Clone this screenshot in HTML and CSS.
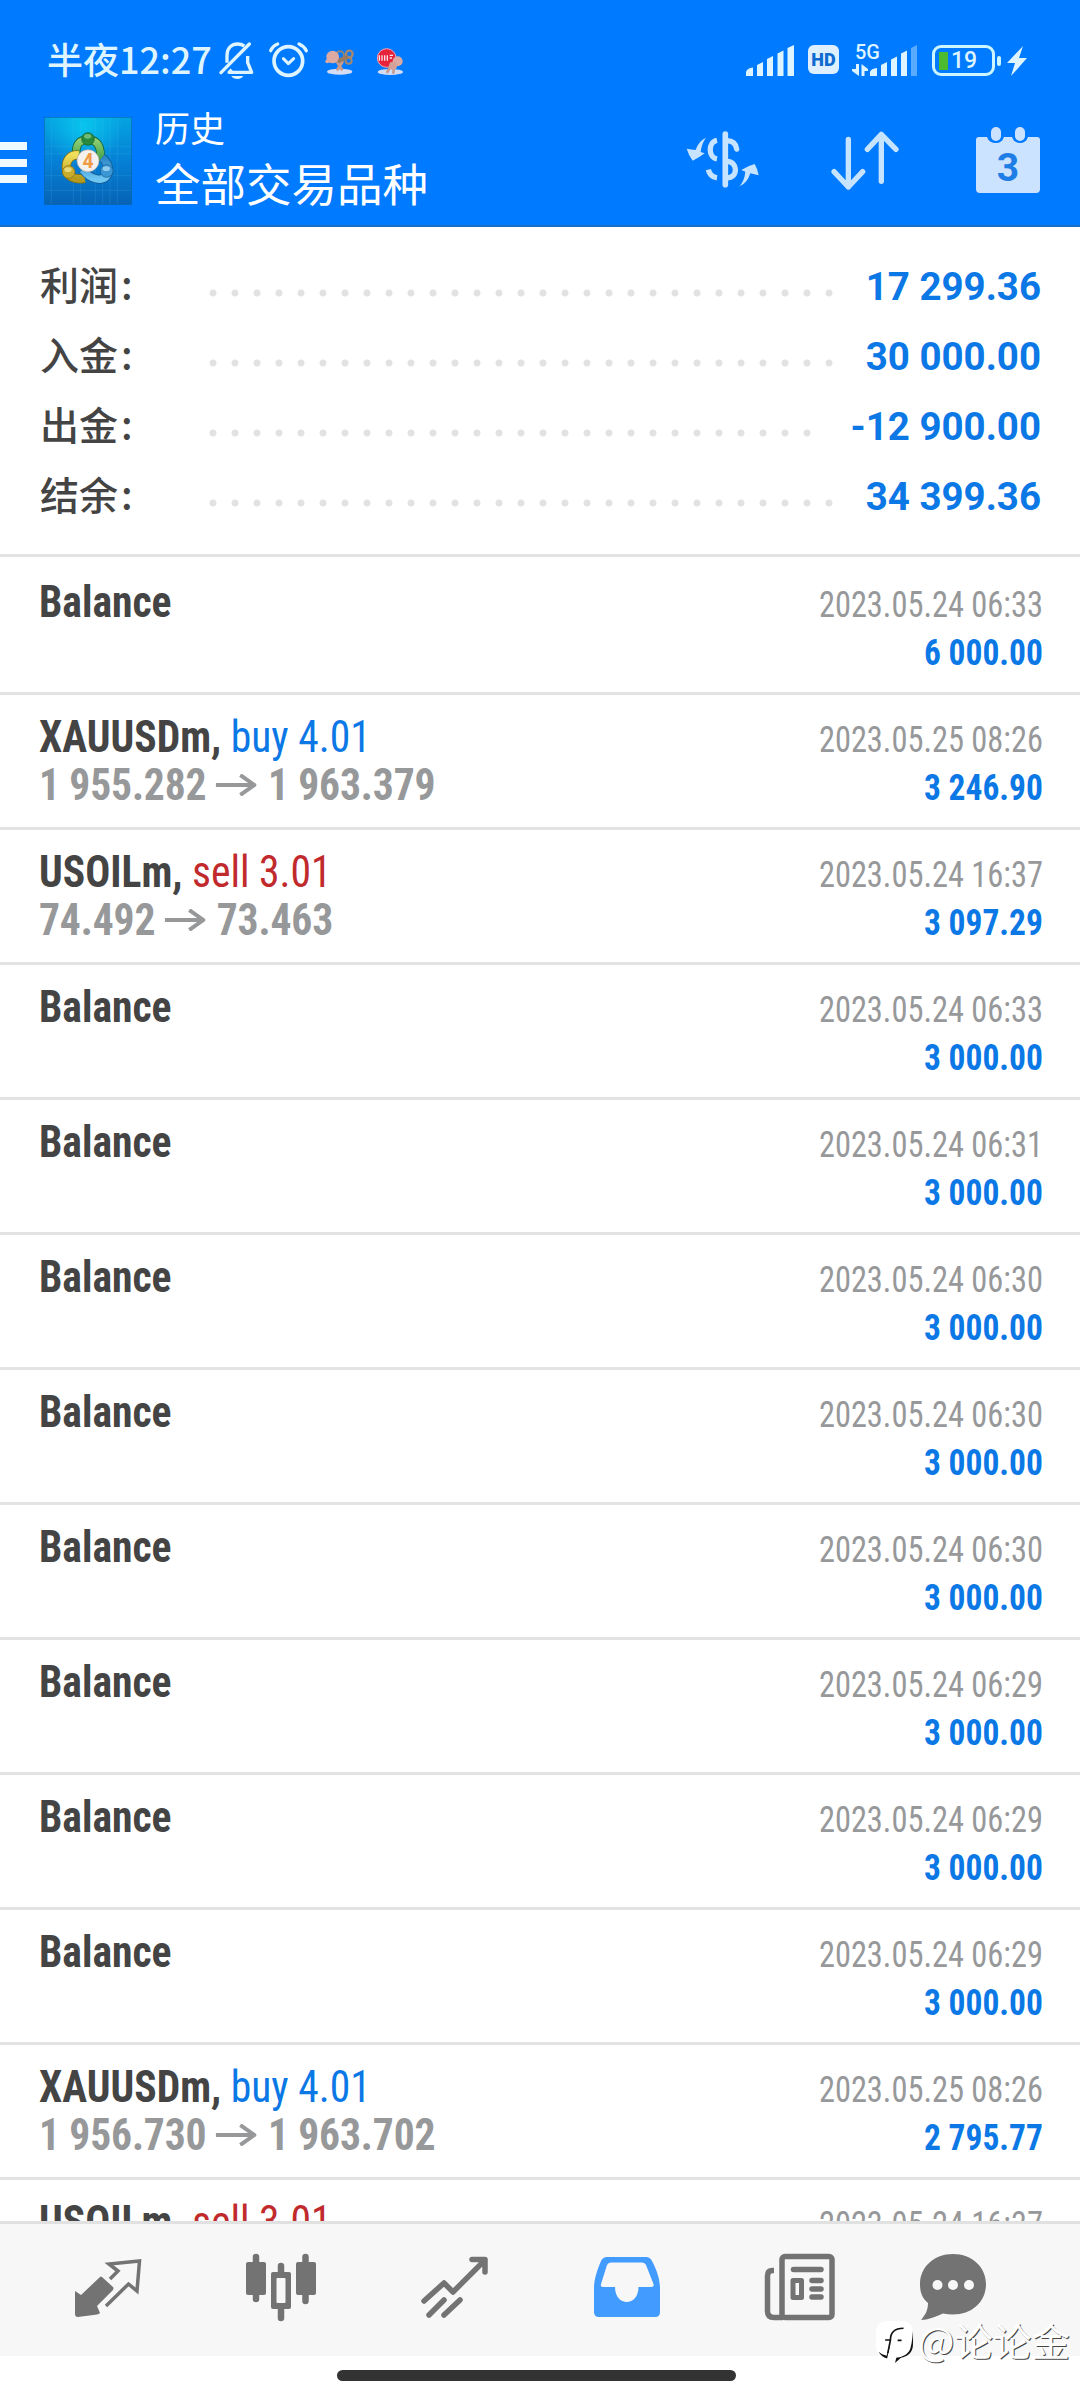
FILE: index.html
```html
<!DOCTYPE html>
<html lang="zh-CN">
<head>
    <meta charset="UTF-8">
    <meta name="viewport" content="width=device-width, initial-scale=1.0">
    <title>历史</title>
    <link rel="stylesheet" href="styles.css">
</head>
<body>

<div class="screen">

    <header class="header">
        <!-- Phone status bar -->
        <div class="status-bar">
            <div class="status-left">
                <span class="clock">半夜12:27</span>
                <svg class="bell" viewBox="28 33 108 116" width="36" height="38.7">
                    <path d="M52 98 V76 C52 54 66 42 84 42 C92 42 98 44 104 48 M114 78 V98 L126 127 H58 L66 119" fill="none" stroke="currentColor" stroke-width="10" stroke-linejoin="round"/>
                    <path d="M34 128 L119 42" stroke="currentColor" stroke-width="10" stroke-linecap="round"/>
                    <path d="M65 138 H101 C95 150 71 150 65 138 Z" fill="currentColor"/>
                </svg>
                <svg class="alarm" viewBox="174 33 122 112" width="40.7" height="37.3">
                    <circle cx="235" cy="93" r="43" fill="none" stroke="currentColor" stroke-width="11"/>
                    <path d="M220 86 L235 101 L251 86" fill="none" stroke="currentColor" stroke-width="9" stroke-linecap="round" stroke-linejoin="round"/>
                    <path d="M182 62 Q188 48 203 42 M267 42 Q282 48 289 62" fill="none" stroke="currentColor" stroke-width="10" stroke-linecap="round"/>
                </svg>
                <svg class="sticker" viewBox="346 54 88 82" width="29.3" height="27.3">
                    <ellipse cx="390" cy="125" rx="38" ry="9" fill="#d3dcf3"/>
                    <path d="M384 98 L396 118 M398 96 L384 118" stroke="#c79a8e" stroke-width="9" stroke-linecap="round"/>
                    <circle cx="391" cy="76" r="12" fill="none" stroke="#8f8478" stroke-width="6"/>
                    <circle cx="419" cy="72" r="10" fill="none" stroke="#a48970" stroke-width="7"/>
                    <circle cx="417" cy="92" r="9" fill="none" stroke="#a48970" stroke-width="6"/>
                    <path d="M388 92 L410 82" stroke="#9a7a5e" stroke-width="12" stroke-linecap="round"/>
                    <circle cx="369" cy="81" r="19" fill="#dcaaa3"/>
                    <circle cx="353" cy="94" r="6" fill="#dcaaa3"/>
                </svg>
                <svg class="sticker sign" viewBox="498 54 86 82" width="28.7" height="27.3">
                    <ellipse cx="541" cy="126" rx="38" ry="9" fill="#d3dcf3"/>
                    <circle cx="530" cy="84" r="28" fill="#e6233a" stroke="#f6a6b4" stroke-width="3"/>
                    <path d="M508 76 V92 M516 76 V92 M524 76 V92 M532 76 V92 M539 76 H549 M539 84 H546" stroke="#fbe4ea" stroke-width="4"/>
                    <path d="M540 112 L532 126 M552 112 L550 128" stroke="#c79a8e" stroke-width="8" stroke-linecap="round"/>
                    <circle cx="563" cy="94" r="15" fill="#dcaaa3"/>
                    <circle cx="549" cy="107" r="12" fill="#d3a199"/>
                </svg>
            </div>
            <div class="status-right">
                <svg class="signal" viewBox="0 0 48 31" width="48" height="31">
                    <path d="M0 31 V27 Q1 23 7 22.500 V31 Z M11 31 V20 L17 17 V31 Z M21 31 V14 L27 11 V31 Z M31.500 31 V8.500 L37.500 5.500 V31 Z M41.500 31 V3 L48 0 V31 Z" fill="currentColor"/>
                </svg>
                <span class="hd">HD</span>
                <svg class="signal-5g" viewBox="0 0 66 34" width="66" height="34">
                    <text x="3" y="17" class="net-type">5G</text>
                    <path d="M4 22 H7 V34 L0 29 V27 H4 Z M9.500 34 V22 L16 27 V29 H12.500 V34 Z" fill="currentColor"/>
                    <path d="M18 34 V30 Q19 26.500 25 26 V34 Z M29 34 V23 L35 20 V34 Z M39 34 V17.500 L45 14.500 V34 Z M49 34 V11.500 L55 8.500 V34 Z" fill="currentColor"/>
                    <path d="M59 34 V6 L65 3 V34 Z" fill="currentColor" opacity=".4"/>
                </svg>
                <div class="battery"><i></i>19</div>
                <div class="battery-tip"></div>
                <svg class="bolt" viewBox="0 0 20 30" width="20" height="30">
                    <path d="M16 0 L0 17 H8 L4 30 L20 12 H12 Z" fill="currentColor"/>
                </svg>
            </div>
        </div>

        <!-- Title bar -->
        <div class="title-bar">
            <div class="burger"><span></span><span></span><span></span></div>
            <svg class="app-icon" viewBox="0 0 264 264" width="88" height="88">
                <defs>
                    <linearGradient id="sky" x1="0" y1="0" x2="0" y2="1">
                        <stop offset="0" stop-color="#04a4e0"/>
                        <stop offset=".5" stop-color="#0580d6"/>
                        <stop offset="1" stop-color="#0763b4"/>
                    </linearGradient>
                    <radialGradient id="glow" cx=".45" cy=".1" r=".45">
                        <stop offset="0" stop-color="#08c4ee"/>
                        <stop offset="1" stop-color="#08c4ee" stop-opacity="0"/>
                    </radialGradient>
                    <linearGradient id="green" x1="0" y1="0" x2="0" y2="1">
                        <stop offset="0" stop-color="#8fcf74"/>
                        <stop offset="1" stop-color="#3f9d48"/>
                    </linearGradient>
                    <linearGradient id="yellow" x1="0" y1="0" x2="0" y2="1">
                        <stop offset="0" stop-color="#f0df5a"/>
                        <stop offset="1" stop-color="#b59a1d"/>
                    </linearGradient>
                    <linearGradient id="blue" x1="0" y1="0" x2="0" y2="1">
                        <stop offset="0" stop-color="#2b86c8"/>
                        <stop offset="1" stop-color="#6fc6f2"/>
                    </linearGradient>
                </defs>
                <rect width="264" height="264" fill="url(#sky)"/>
                <rect width="264" height="264" fill="url(#glow)"/>
                <path d="M22 0 V264 M88 0 V264 M110 0 V264 M154 0 V264 M176 0 V264 M198 0 V264 M220 0 V264 M0 88 H264 M0 110 H264 M0 176 H264 M0 220 H264" stroke="#5fc8f5" stroke-width="1.500" opacity=".3"/>
                <path d="M98 118 C92 84 106 68 132 68 C158 68 174 86 169 132" fill="none" stroke="#17662f" stroke-width="26"/>
                <path d="M98 118 C92 84 106 68 132 68 C158 68 174 86 169 132" fill="none" stroke="url(#green)" stroke-width="21"/>
                <path d="M104 114 C80 112 66 128 67 152 C68 178 90 190 122 184" fill="none" stroke="#85700f" stroke-width="28"/>
                <path d="M104 114 C80 112 66 128 67 152 C68 178 90 190 122 184" fill="none" stroke="url(#yellow)" stroke-width="23"/>
                <path d="M174 122 C190 134 200 158 190 174 C176 196 140 188 116 158" fill="none" stroke="#155b93" stroke-width="27"/>
                <path d="M174 122 C190 134 200 158 190 174 C176 196 140 188 116 158" fill="none" stroke="url(#blue)" stroke-width="22"/>
                <circle cx="132" cy="66" r="19" fill="#298a3e" stroke="#176230" stroke-width="2"/>
                <ellipse cx="131" cy="58" rx="11" ry="7" fill="#8fd08e" opacity=".7"/>
                <circle cx="74" cy="165" r="19" fill="#c9ac2b" stroke="#816a12" stroke-width="2"/>
                <ellipse cx="72" cy="158" rx="11" ry="7" fill="#f5eb9a" opacity=".7"/>
                <circle cx="188" cy="162" r="19" fill="#3b97d3" stroke="#155b93" stroke-width="2"/>
                <ellipse cx="187" cy="155" rx="11" ry="7" fill="#b7e2fa" opacity=".7"/>
                <circle cx="132" cy="131" r="33" fill="#f4f1ee" stroke="#b9a896" stroke-width="2"/>
                <text x="132" y="152" text-anchor="middle" class="app-number">4</text>
                <rect x="1" y="1" width="262" height="262" fill="none" stroke="#0b66b8" stroke-width="2"/>
            </svg>
            <div class="titles">
                <div class="title-small">历史</div>
                <div class="title-big">全部交易品种</div>
            </div>
            <div class="actions">
                <svg viewBox="16 33 220 172" width="73.3" height="57.3">
                    <g fill="none" stroke="currentColor">
                        <path d="M134 42 V194" stroke-width="17" stroke-linecap="round"/>
                        <path d="M109 61 C82 66 82 112 109 117 M109 174 C96 172 86 162 83 149" stroke-width="16"/>
                        <path d="M138 62 C156 62 166 72 168 87" stroke-width="16" stroke-linecap="round"/>
                        <path d="M138 124 C170 122 176 174 138 174" stroke-width="16"/>
                    </g>
                    <path d="M76 53 Q54 62 45 90 Q32 88 18 86 Q24 106 36 122 Q54 114 72 100 L60 96 Q62 72 76 53 Z M177 199 Q200 190 209 160 L234 166 Q232 148 222 132 Q200 138 182 150 L194 155 Q192 180 177 199 Z" fill="currentColor"/>
                </svg>
                <svg viewBox="453 33 204 178" width="68" height="59.3">
                    <path d="M505 58 V201 M462 155 L505 201 L548 155 M604 184 V43 M562 88 L604 43 L648 88" fill="none" stroke="currentColor" stroke-width="16" stroke-linecap="round" stroke-linejoin="round"/>
                </svg>
                <svg class="calendar" viewBox="0 0 64 66" width="64" height="66">
                    <path d="M3 10 H11 Q13 16 20 16 Q26 16 28 10 H36 Q38 16 44 16 Q50 16 52 10 H61 Q64 10 64 13 V62 Q64 66 60 66 H4 Q0 66 0 62 V13 Q0 10 3 10 Z" fill="currentColor"/>
                    <rect x="15" y="0" width="10" height="14" rx="5" fill="currentColor"/>
                    <rect x="39" y="0" width="10" height="14" rx="5" fill="currentColor"/>
                    <text x="32" y="54" text-anchor="middle" class="calendar-day">3</text>
                </svg>
            </div>
        </div>
    </header>

    <!-- Account summary -->
    <section class="summary">
        <div class="summary-row"><span class="label">利润<i>:</i></span><span class="dots"></span><span class="amount">17 299.36</span></div>
        <div class="summary-row"><span class="label">入金<i>:</i></span><span class="dots"></span><span class="amount">30 000.00</span></div>
        <div class="summary-row"><span class="label">出金<i>:</i></span><span class="dots"></span><span class="amount">-12 900.00</span></div>
        <div class="summary-row"><span class="label">结余<i>:</i></span><span class="dots"></span><span class="amount">34 399.36</span></div>
    </section>

    <!-- Deals -->
    <main class="deals">
        <div class="deal">
            <div class="deal-left"><div class="symbol">Balance</div></div>
            <div class="deal-right"><div class="date">2023.05.24 06:33</div><div class="profit">6 000.00</div></div>
        </div>
        <div class="deal">
            <div class="deal-left">
                <div class="symbol">XAUUSDm, <span class="buy">buy 4.01</span></div>
                <div class="prices">1 955.282<svg class="arrow" viewBox="0 0 43 22" width="43" height="22"><path d="M0 11 H41 M26 1 L41 11 L26 21"/></svg>1 963.379</div>
            </div>
            <div class="deal-right"><div class="date">2023.05.25 08:26</div><div class="profit">3 246.90</div></div>
        </div>
        <div class="deal">
            <div class="deal-left">
                <div class="symbol">USOILm, <span class="sell">sell 3.01</span></div>
                <div class="prices">74.492<svg class="arrow" viewBox="0 0 43 22" width="43" height="22"><path d="M0 11 H41 M26 1 L41 11 L26 21"/></svg>73.463</div>
            </div>
            <div class="deal-right"><div class="date">2023.05.24 16:37</div><div class="profit">3 097.29</div></div>
        </div>
        <div class="deal">
            <div class="deal-left"><div class="symbol">Balance</div></div>
            <div class="deal-right"><div class="date">2023.05.24 06:33</div><div class="profit">3 000.00</div></div>
        </div>
        <div class="deal">
            <div class="deal-left"><div class="symbol">Balance</div></div>
            <div class="deal-right"><div class="date">2023.05.24 06:31</div><div class="profit">3 000.00</div></div>
        </div>
        <div class="deal">
            <div class="deal-left"><div class="symbol">Balance</div></div>
            <div class="deal-right"><div class="date">2023.05.24 06:30</div><div class="profit">3 000.00</div></div>
        </div>
        <div class="deal">
            <div class="deal-left"><div class="symbol">Balance</div></div>
            <div class="deal-right"><div class="date">2023.05.24 06:30</div><div class="profit">3 000.00</div></div>
        </div>
        <div class="deal">
            <div class="deal-left"><div class="symbol">Balance</div></div>
            <div class="deal-right"><div class="date">2023.05.24 06:30</div><div class="profit">3 000.00</div></div>
        </div>
        <div class="deal">
            <div class="deal-left"><div class="symbol">Balance</div></div>
            <div class="deal-right"><div class="date">2023.05.24 06:29</div><div class="profit">3 000.00</div></div>
        </div>
        <div class="deal">
            <div class="deal-left"><div class="symbol">Balance</div></div>
            <div class="deal-right"><div class="date">2023.05.24 06:29</div><div class="profit">3 000.00</div></div>
        </div>
        <div class="deal">
            <div class="deal-left"><div class="symbol">Balance</div></div>
            <div class="deal-right"><div class="date">2023.05.24 06:29</div><div class="profit">3 000.00</div></div>
        </div>
        <div class="deal">
            <div class="deal-left">
                <div class="symbol">XAUUSDm, <span class="buy">buy 4.01</span></div>
                <div class="prices">1 956.730<svg class="arrow" viewBox="0 0 43 22" width="43" height="22"><path d="M0 11 H41 M26 1 L41 11 L26 21"/></svg>1 963.702</div>
            </div>
            <div class="deal-right"><div class="date">2023.05.25 08:26</div><div class="profit">2 795.77</div></div>
        </div>
        <div class="deal">
            <div class="deal-left"><div class="symbol">USOILm, <span class="sell">sell 3.01</span></div></div>
            <div class="deal-right"><div class="date">2023.05.24 16:37</div></div>
        </div>
    </main>

    <!-- Bottom tabs -->
    <nav class="tabs">
        <!-- quotes -->
        <svg viewBox="0 0 74 74" width="74" height="74">
            <path d="M4 41 L10 45 L29 27 Q30 26 31 27 L42 37 Q43 38 42 40 L26 56 L29 63 Q28 64 26 64.500 L7 67 Q4 67 4 64 Z" fill="currentColor"/>
            <path d="M39 29 L47 21 L38 14 L68.500 11 L66 41 L57.500 34 L35 56" fill="none" stroke="currentColor" stroke-width="3.500"/>
        </svg>
        <!-- chart -->
        <svg viewBox="0 0 74 74" width="74" height="74">
            <path d="M12 7 V49 M61.500 7 V51 M37 16 V68" stroke="currentColor" stroke-width="6.500" stroke-linecap="round"/>
            <rect x="2" y="12" width="20" height="33" rx="2" fill="currentColor"/>
            <rect x="52" y="12" width="20" height="33" rx="2" fill="currentColor"/>
            <rect x="27" y="22" width="20" height="37" rx="2" fill="currentColor"/>
            <rect x="32.500" y="28" width="9" height="25" rx="1" fill="#f7f7f7"/>
        </svg>
        <!-- trade -->
        <svg viewBox="0 0 74 74" width="74" height="74">
            <path d="M7 51 L27 33 L36 42 L68 10 M55 9.500 H68 V22 M12 65 L27 50 M27 65 L43 50" fill="none" stroke="currentColor" stroke-width="5.500" stroke-linecap="round" stroke-linejoin="round"/>
        </svg>
        <!-- history -->
        <svg class="active" viewBox="0 0 74 74" width="74" height="74">
            <path fill-rule="evenodd" d="M17 7 H56 Q60 7 62 11 C67 20 70 30 70 38 V62 Q70 67 65 67 H9 Q4 67 4 62 V38 C4 30 7 20 11 11 Q13 7 17 7 Z M21 12.500 Q18 12.500 17 15 L11 34 Q10 37 13 37 H25 C25 57 48.500 57 48.500 37 H61 Q64.500 37 63.500 34 L56 15 Q55 12.500 52 12.500 Z" fill="currentColor"/>
        </svg>
        <!-- news -->
        <svg viewBox="0 0 74 74" width="74" height="74">
            <rect x="19" y="6.500" width="50" height="61" rx="3" fill="none" stroke="currentColor" stroke-width="5.500"/>
            <path d="M11 20.500 H9.500 Q4.500 20.500 4.500 26 V61 Q4.500 67.500 11 67.500 H20" fill="none" stroke="currentColor" stroke-width="5.500"/>
            <path d="M30.500 19.500 H58 M49 30.500 H58 M49 39 H58 M49 47 H58" stroke="currentColor" stroke-width="5.500" stroke-linecap="round"/>
            <rect x="30" y="30.500" width="8.500" height="17" fill="none" stroke="currentColor" stroke-width="5" stroke-linejoin="round"/>
        </svg>
        <!-- messages -->
        <svg viewBox="0 0 74 74" width="74" height="74">
            <path d="M37 4 C56 4 70 17 70 34 C70 52 56 64.500 37 64.500 Q32 64.500 27 63.500 C19 67 12 70 5 70 C9 65 12 61 12 53 C6 48 4 42 4 34 C4 17 18 4 37 4 Z" fill="currentColor"/>
            <g fill="#f7f7f7">
                <circle cx="21.500" cy="35" r="5"/>
                <circle cx="37" cy="35" r="5"/>
                <circle cx="53" cy="35" r="5"/>
            </g>
        </svg>
    </nav>

    <div class="gesture-area"><div class="gesture-pill"></div></div>

    <div class="watermark">
        <svg viewBox="48 60 116 132" width="38" height="44">
            <rect x="48" y="62" width="112" height="110" rx="30" fill="#fff"/>
            <path d="M161 92 V132 C161 160 144 170 124 174 L106 190 L110 174 Q138 170 149 154 Q157 144 161 92 Z M56 156 Q64 172 82 176 L92 130 L80 168 Q66 166 56 156 Z" fill="#111"/>
            <path d="M76 120 H92 C92 96 104 84 132 84 M92 120 L84 160 M114 121 H126" fill="none" stroke="#111" stroke-width="5"/>
        </svg>
        <span>@论论金</span>
    </div>

</div>

</body>
</html>
```

FILE: styles.css
```css
* {
    margin: 0;
    padding: 0;
    box-sizing: border-box;
}

body {
    width: 1080px;
    font-family: Roboto, "Noto Sans CJK SC", sans-serif;
    background-color: #fff;
}

svg {
    display: block;
    flex-shrink: 0;
}

.screen {
    position: relative;
    display: flex;
    flex-direction: column;
    height: 2400px;
    overflow: hidden;
}

/* Header */
.header {
    flex-shrink: 0;
    height: 227px;
    background-color: #007aff;
    border-bottom: 2px solid #1a6fc4;
    color: #fff;
}

.status-bar {
    display: flex;
    justify-content: space-between;
    height: 100px;
    padding: 41px 53px 0 47px;
    color: #def5ff;
}

.status-left,
.status-right {
    display: flex;
    align-items: flex-start;
}

.clock {
    width: 172px;
    margin-top: -2px;
    font-family: "Noto Sans CJK SC", sans-serif;
    font-size: 36px;
    font-weight: 500;
    line-height: 38px;
    white-space: nowrap;
}

.alarm {
    margin-left: 13px;
}

.sticker {
    margin: 7px 0 0 16px;
}

.sign {
    margin-left: 22px;
}

.signal {
    margin-top: 4px;
}

.hd {
    width: 31px;
    height: 29px;
    margin: 4px 0 0 14px;
    border-radius: 6px;
    background-color: #def0ff;
    color: #0f6bd0;
    font-size: 18px;
    font-weight: 900;
    line-height: 29px;
    text-align: center;
}

.signal-5g {
    margin: 1px 0 0 13px;
    overflow: visible;
}

.net-type {
    font-size: 20px;
    font-weight: 500;
    fill: currentColor;
}

.battery {
    display: flex;
    align-items: center;
    width: 63px;
    height: 31px;
    margin: 4px 0 0 14px;
    padding-left: 4px;
    border: 3px solid #cdf5ff;
    border-radius: 9px;
    font-size: 23px;
    font-weight: 500;
    line-height: 25px;
}

.battery i {
    width: 9px;
    height: 18px;
    margin-right: 3px;
    background-color: #4cbb2f;
}

.battery-tip {
    width: 4px;
    height: 10px;
    margin: 15px 6px 0 2px;
    border-radius: 2px;
    background-color: #cdf5ff;
}

.bolt {
    margin-top: 5px;
}

.title-bar {
    display: flex;
    height: 125px;
}

.burger {
    display: flex;
    flex-direction: column;
    gap: 8.5px;
    width: 27px;
    margin: 42px 17px 0 0;
}

.burger span {
    height: 8px;
    background-color: #eefaff;
}

.app-icon {
    margin-top: 17px;
}

.app-number {
    font-size: 58px;
    font-weight: 700;
    fill: #ef9a45;
}

.titles {
    width: 554px;
    padding: 5px 0 0 23px;
    font-family: "Noto Sans CJK SC", sans-serif;
}

.title-small {
    font-size: 35px;
    line-height: 44px;
}

.title-big {
    font-size: 45.5px;
    line-height: 66px;
}

.actions {
    display: flex;
    color: #c6e4ff;
}

.actions svg:nth-child(1) {
    margin: 31px 0 0 0;
}

.actions svg:nth-child(2) {
    margin: 31px 0 0 72px;
}

.actions .calendar {
    margin: 27px 0 0 77px;
    color: #cce3ff;
}

.calendar-day {
    font-size: 39px;
    font-weight: 700;
    fill: #1f7ee6;
}

/* Summary */
.summary {
    flex-shrink: 0;
    height: 330px;
    padding: 24px 39px 0 40px;
    border-bottom: 3px solid #e3e3e3;
}

.summary-row {
    display: flex;
    align-items: center;
    height: 70px;
}

.label {
    width: 162px;
    margin-top: -6px;
    font-family: "Noto Sans CJK SC", sans-serif;
    font-size: 39px;
    font-weight: 500;
    color: #444;
    line-height: 50px;
}

.label i {
    margin-left: 3px;
    font-style: normal;
}

.dots {
    flex: 1;
    height: 8px;
    margin: 13px 26px 0 0;
    background-image: radial-gradient(circle, #e2e2e2 3px, transparent 4px);
    background-size: 22px 8px;
}

.amount {
    margin-top: 1px;
    font-size: 38.5px;
    font-weight: 700;
    line-height: 50px;
    color: #0b78e6;
}

/* Deals */
.deals {
    flex: 1;
    min-height: 0;
    padding-top: 3px;
    overflow: hidden;
    font-family: "Roboto Condensed", Roboto, sans-serif;
}

.deal {
    display: flex;
    justify-content: space-between;
    height: 135px;
    padding: 18px 37px 0 39px;
    border-bottom: 3px solid #e3e3e3;
    white-space: nowrap;
}

.deal-left {
    transform: scaleX(.945);
    transform-origin: left;
}

.deal-right {
    padding-top: 3px;
    text-align: right;
}

.symbol,
.prices {
    font-size: 44px;
    font-weight: 700;
    line-height: 48px;
    color: #444;
}

.prices {
    display: flex;
    align-items: center;
    color: #97989a;
    letter-spacing: -.15px;
}

.symbol span {
    font-weight: 400;
}

.symbol .buy {
    color: #0b78e6;
}

.symbol .sell {
    color: #c12a2c;
}

.arrow {
    margin: 0 12px 0 10px;
}

.arrow path {
    fill: none;
    stroke: #97989a;
    stroke-width: 4;
}

.date,
.profit {
    font-size: 36px;
    line-height: 48px;
    color: #97989a;
    transform: scaleX(.9);
    transform-origin: right;
}

.profit {
    font-weight: 700;
    color: #0b78e6;
    transform: scaleX(.93);
}

/* Bottom tabs */
.tabs {
    flex-shrink: 0;
    display: grid;
    grid-template-columns: repeat(5, 173.2px) 132px;
    justify-items: center;
    height: 135px;
    padding: 26px 0 0 21px;
    border-top: 3px solid #e1e1e1;
    background-color: #f7f7f7;
    color: #737373;
}

.tabs .active {
    color: #429bff;
}

.gesture-area {
    flex-shrink: 0;
    height: 44px;
    padding-top: 14px;
}

.gesture-pill {
    width: 399px;
    height: 11px;
    margin-left: 337px;
    border-radius: 6px;
    background-color: #333;
}

/* Watermark over the tabs */
.watermark {
    position: absolute;
    right: 10px;
    bottom: 36px;
    display: flex;
    align-items: center;
    gap: 4px;
    font-family: "Noto Sans CJK SC", sans-serif;
    font-size: 38.5px;
    line-height: 50px;
    color: #fff;
    text-shadow: 1px 1px 0 #444;
}

.watermark span {
    margin-top: -6px;
}
```
